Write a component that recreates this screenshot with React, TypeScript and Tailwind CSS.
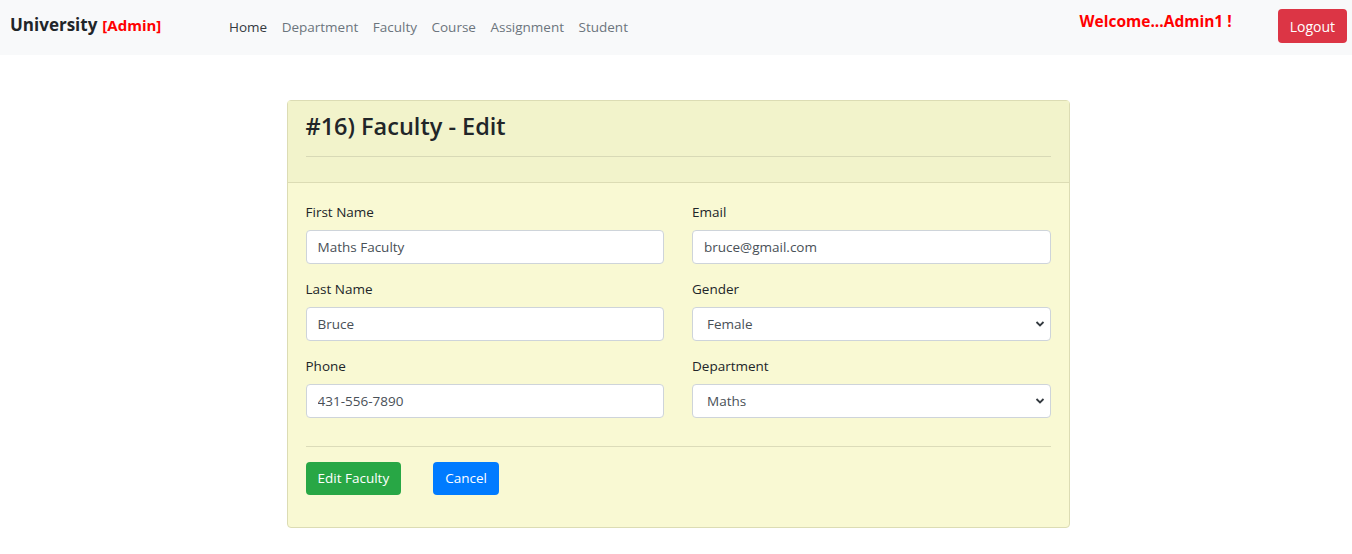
import React from 'react'

const font = { fontFamily: '"Open Sans", "Noto Sans", sans-serif' }

function Field({ label, value }: { label: string; value: string }) {
  return (
    <div className="flex flex-col">
      <label className="text-[13.5px] text-[#212529] leading-[20px] mb-[8px]">{label}</label>
      <input
        defaultValue={value}
        className="h-[34px] w-full rounded-[4px] border border-[#ced4da] bg-white px-[11px] text-[13.5px] text-[#495057] outline-none"
      />
    </div>
  )
}

function SelectField({ label, value, options }: { label: string; value: string; options: string[] }) {
  return (
    <div className="flex flex-col">
      <label className="text-[13.5px] text-[#212529] leading-[20px] mb-[8px]">{label}</label>
      <div className="relative">
        <select
          defaultValue={value}
          className="h-[34px] w-full appearance-none rounded-[4px] border border-[#ced4da] bg-white px-[14px] text-[13.5px] text-[#495057] outline-none"
        >
          {options.map(o => (
            <option key={o}>{o}</option>
          ))}
        </select>
        <svg className="pointer-events-none absolute right-[6px] top-[13px]" width="10" height="8" viewBox="0 0 10 8">
          <path d="M1.5 2 L5 5.5 L8.5 2" fill="none" stroke="#343a40" strokeWidth="1.8" />
        </svg>
      </div>
    </div>
  )
}

export default function App() {
  return (
    <div className="min-h-[554px] bg-white" style={font}>
      <nav className="flex h-[55px] items-center bg-[#f8f9fa] pl-[10px] pr-[5px]">
        <div className="-mt-[6px] flex w-[219px] items-baseline">
          <span className="text-[17px] font-bold text-[#212529]">University</span>
          <span className="ml-[5px] text-[15px] font-bold text-[#ff0000]">[Admin]</span>
        </div>
        <div className="flex gap-[14.5px] text-[13.5px] text-[#6c757d]">
          <span className="text-[#343a40]">Home</span>
          <span>Department</span>
          <span>Faculty</span>
          <span>Course</span>
          <span>Assignment</span>
          <span>Student</span>
        </div>
        <div className="ml-auto flex items-center">
          <span className="mr-[46px] -mt-[11px] text-[15.5px] font-bold text-[#ff0000]">Welcome...Admin1 !</span>
          <button className="-mt-[3px] h-[34px] rounded-[4px] bg-[#dc3545] px-[12px] text-[14px] text-white">Logout</button>
        </div>
      </nav>

      <div className="flex justify-center pt-[45px] pb-[26px] pl-[4px]">
        <div className="w-[783px] rounded-[4px] border border-[#dcdcb4] bg-[#f9f9d3]">
          <div className="border-b border-[#dcdcb4] bg-[#f2f3cb] px-[18px] pt-[9px] pb-[25px]">
            <h2 className="text-[23.5px] font-semibold text-[#212529] leading-[32px]">#16) Faculty - Edit</h2>
            <hr className="mt-[14px] border-t border-[#d8d9b6]" />
          </div>
          <div className="px-[18px] pt-[19px] pb-[32px]">
            <div className="grid grid-cols-2 gap-x-[28px] gap-y-[15px]">
              <Field label="First Name" value="Maths Faculty" />
              <Field label="Email" value="bruce@gmail.com" />
              <Field label="Last Name" value="Bruce" />
              <SelectField label="Gender" value="Female" options={['Male', 'Female']} />
              <Field label="Phone" value="431-556-7890" />
              <SelectField label="Department" value="Maths" options={['Maths', 'Science', 'Arts']} />
            </div>
            <hr className="mt-[28px] border-t border-[#dcdcb9]" />
            <div className="mt-[15px] flex gap-[32px]">
              <button className="h-[33px] rounded-[4px] bg-[#28a745] px-[12px] text-[13.5px] text-white">Edit Faculty</button>
              <button className="h-[33px] rounded-[4px] bg-[#007bff] px-[12px] text-[13.5px] text-white">Cancel</button>
            </div>
          </div>
        </div>
      </div>
    </div>
  )
}
